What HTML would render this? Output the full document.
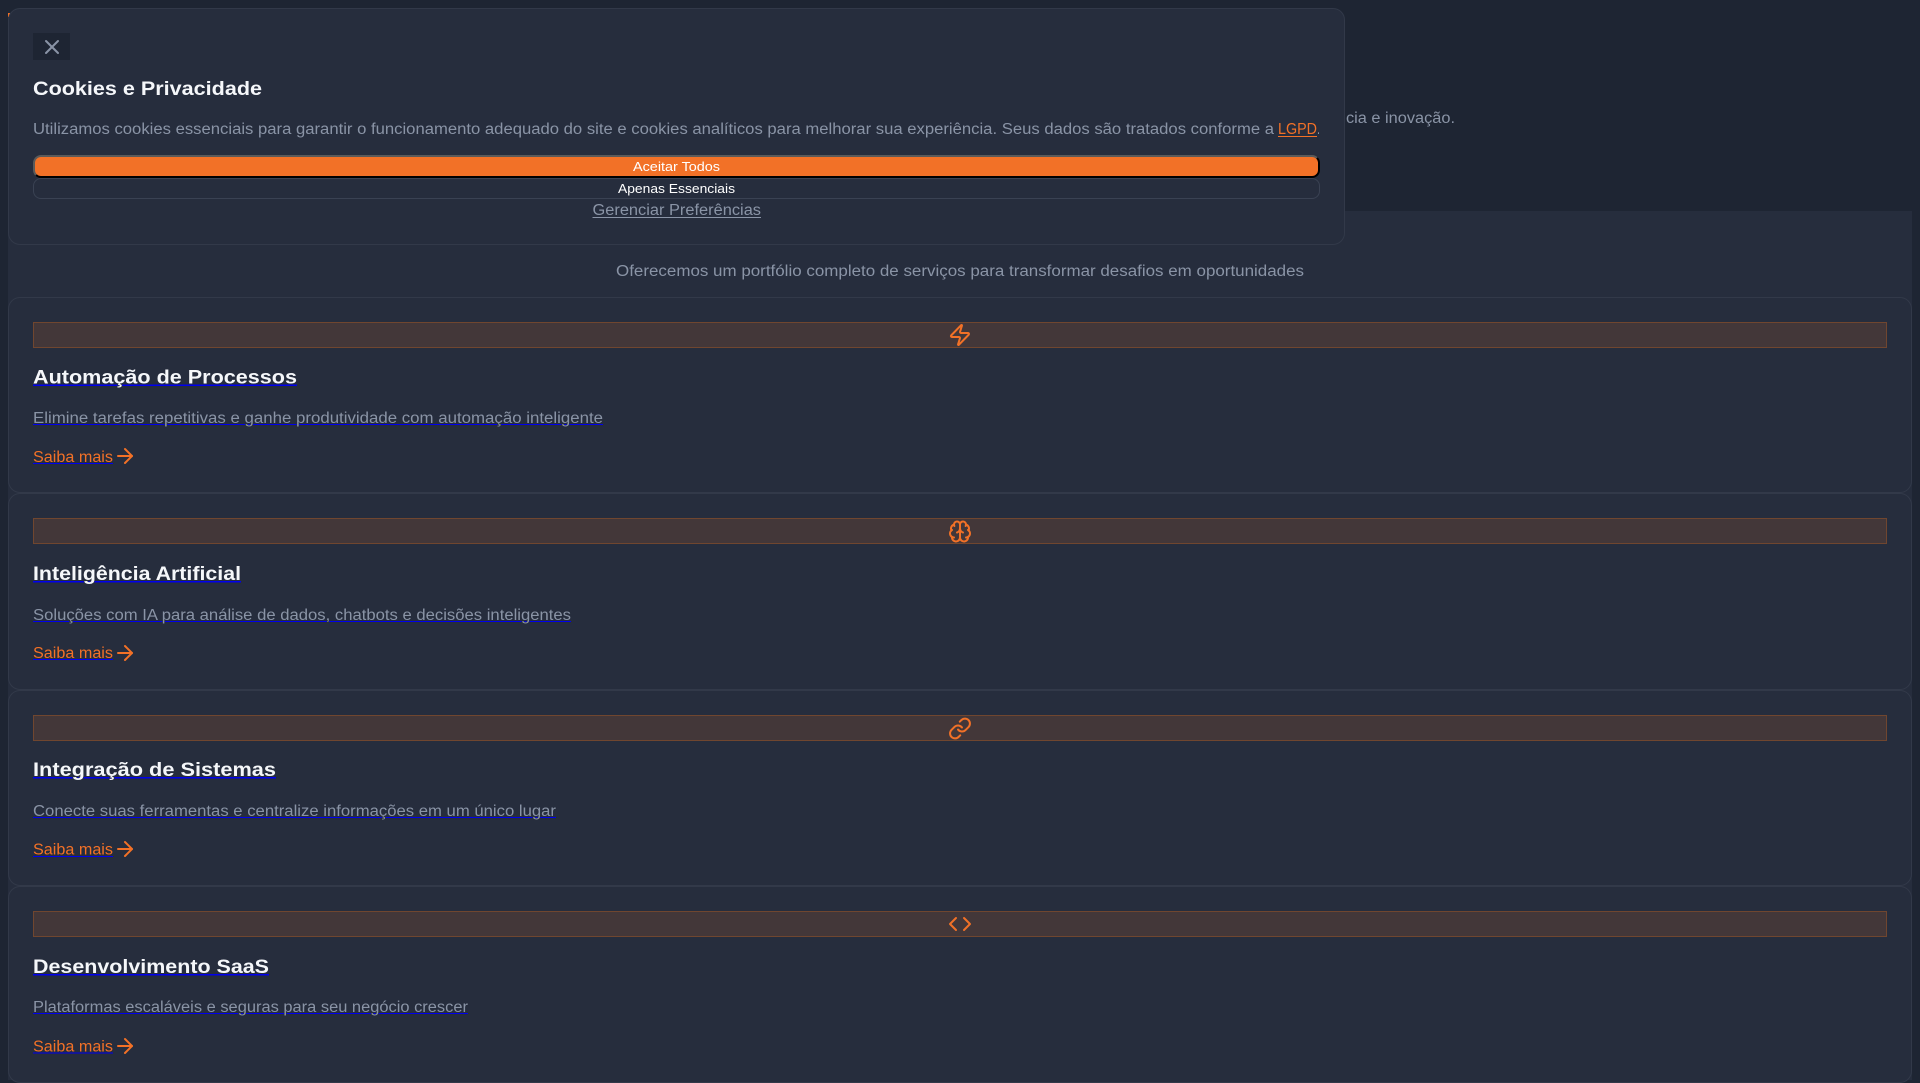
<!DOCTYPE html>
<html lang="pt-BR">
<head>
<meta charset="utf-8">
<title>Cookies e Privacidade</title>
<style>
html,body{margin:0;padding:0;width:1920px;height:1080px;overflow:hidden;background:#1e2533}
.abs,section,.card,.bar,.modal,button{position:absolute;box-sizing:border-box}
section{left:8px;top:211px;width:1904px;height:869px;background:#262d3d}
.card{left:8px;width:1904px;height:196.4px;background:#262d3d;border:1px solid #323949;border-radius:12px}
.bar{left:33px;width:1854px;height:26px;background:#433739;border:1px solid #70462f}
.logo{position:absolute;left:8px;top:13px;width:2px;height:4px;background:#f27127}
.modal{left:8px;top:8px;width:1337px;height:236.5px;background:#262d3d;border:1px solid #323949;border-radius:12px}
button{padding:0;margin:0}
.close{left:33px;top:33px;width:37px;height:27px;background:#1e2533;border:0}
.accept{left:33px;top:155px;width:1287px;height:23px;background:#f27127;border:2px solid;border-color:#5a5a5a #000 #000 #5a5a5a;border-radius:8px}
.ess{left:33px;top:178px;width:1287px;height:21px;background:#262d3d;border:1px solid #3a4253;border-radius:8px}
svg.top{position:absolute;left:0;top:0;width:1920px;height:1080px}
text{font-family:"Liberation Sans",sans-serif}
.t{font-size:19px;font-weight:700;fill:#f5f7fa;paint-order:stroke fill;stroke:#262d3d;stroke-width:1px}
.d{font-size:15.5px;fill:#8a94a6;paint-order:stroke fill;stroke:#262d3d;stroke-width:1px}
.s{font-size:15.5px;fill:#f27127;paint-order:stroke fill;stroke:#262d3d;stroke-width:1px}
.b{font-size:15.5px;fill:#8a94a6}
.u{fill:#0000ee}
.ic{fill:none;stroke:#f27127;stroke-width:2;stroke-linecap:round;stroke-linejoin:round}
</style>
</head>
<body>
<div class="logo"></div>
<section></section>
<div class="card" style="top:297px"></div>
<div class="card" style="top:493.4px"></div>
<div class="card" style="top:689.8px"></div>
<div class="card" style="top:886.2px"></div>
<div class="bar" style="top:322px"></div>
<div class="bar" style="top:518px"></div>
<div class="bar" style="top:715px"></div>
<div class="bar" style="top:911px"></div>
<div class="modal"></div>
<button class="close" aria-label="Fechar"></button>
<button class="accept" aria-label="Aceitar Todos"></button>
<button class="ess" aria-label="Apenas Essenciais"></button>

<svg class="top" viewBox="0 0 1920 1080" xmlns="http://www.w3.org/2000/svg">
  <!-- background text -->
  <text class="b" x="1346" y="123" textLength="109" lengthAdjust="spacingAndGlyphs">cia e inovação.</text>
  <text class="b" x="616" y="276" textLength="688" lengthAdjust="spacingAndGlyphs">Oferecemos um portfólio completo de serviços para transformar desafios em oportunidades</text>

  <!-- modal -->
  <g fill="none" stroke="#8a94a6" stroke-width="2" stroke-linecap="round" stroke-linejoin="round" transform="translate(40 35)"><path d="M18 6 6 18"/><path d="m6 6 12 12"/></g>
  <text x="33" y="95" font-size="19" font-weight="700" fill="#f5f7fa" textLength="229" lengthAdjust="spacingAndGlyphs">Cookies e Privacidade</text>
  <text class="b" x="33" y="134" textLength="1241" lengthAdjust="spacingAndGlyphs">Utilizamos cookies essenciais para garantir o funcionamento adequado do site e cookies analíticos para melhorar sua experiência. Seus dados são tratados conforme a</text>
  <text x="1278" y="134" font-size="16" fill="#f27127" textLength="39" lengthAdjust="spacingAndGlyphs">LGPD</text>
  <rect x="1278" y="136" width="39" height="1" fill="#f27127"/>
  <text class="b" x="1317" y="134" textLength="3" lengthAdjust="spacingAndGlyphs">.</text>
  <text x="633" y="171" font-size="13" fill="#fff" textLength="87" lengthAdjust="spacingAndGlyphs">Aceitar Todos</text>
  <text x="618" y="193" font-size="13" fill="#fff" textLength="117" lengthAdjust="spacingAndGlyphs">Apenas Essenciais</text>
  <text class="b" x="592.5" y="215" textLength="168.5" lengthAdjust="spacingAndGlyphs">Gerenciar Preferências</text>
  <rect x="592.5" y="217" width="168.5" height="1" fill="#8a94a6"/>

  <!-- card 1 -->
  <g transform="translate(948 323)"><path class="ic" d="M4 14a1 1 0 0 1-.78-1.63l9.9-10.2a.5.5 0 0 1 .86.46l-1.92 6.02A1 1 0 0 0 13 10h7a1 1 0 0 1 .78 1.63l-9.9 10.2a.5.5 0 0 1-.86-.46l1.92-6.02A1 1 0 0 0 11 14z"/></g>
  <rect class="u" x="33" y="384.5" width="264" height="1.5"/>
  <text class="t" x="33" y="383.4" textLength="264" lengthAdjust="spacingAndGlyphs">Automação de Processos</text>
  <rect class="u" x="33" y="424" width="570" height="1"/>
  <text class="d" x="33" y="423" textLength="570" lengthAdjust="spacingAndGlyphs">Elimine tarefas repetitivas e ganhe produtividade com automação inteligente</text>
  <rect class="u" x="33" y="463" width="80" height="1"/>
  <text class="s" x="33" y="462" textLength="80" lengthAdjust="spacingAndGlyphs">Saiba mais</text>
  <g transform="translate(113 444)"><path class="ic" d="M5 12h14"/><path class="ic" d="m12 5 7 7-7 7"/></g>

  <!-- card 2 -->
  <g transform="translate(948 519.5)" class="ic"><path d="M12 5a3 3 0 1 0-5.997.125 4 4 0 0 0-2.526 5.77 4 4 0 0 0 .556 6.588A4 4 0 1 0 12 18Z"/><path d="M12 5a3 3 0 1 1 5.997.125 4 4 0 0 1 2.526 5.77 4 4 0 0 1-.556 6.588A4 4 0 1 1 12 18Z"/><path d="M15 13a4.5 4.5 0 0 1-3-4 4.5 4.5 0 0 1-3 4"/><path d="M17.599 6.5a3 3 0 0 0 .399-1.375"/><path d="M6.003 5.125A3 3 0 0 0 6.401 6.5"/><path d="M3.477 10.896a4 4 0 0 1 .585-.396"/><path d="M19.938 10.5a4 4 0 0 1 .585.396"/><path d="M6 18a4 4 0 0 1-1.967-.516"/><path d="M19.967 17.484A4 4 0 0 1 18 18"/></g>
  <rect class="u" x="33" y="581" width="208" height="1.5"/>
  <text class="t" x="33" y="580" textLength="208" lengthAdjust="spacingAndGlyphs">Inteligência Artificial</text>
  <rect class="u" x="33" y="621" width="538" height="1"/>
  <text class="d" x="33" y="620" textLength="538" lengthAdjust="spacingAndGlyphs">Soluções com IA para análise de dados, chatbots e decisões inteligentes</text>
  <rect class="u" x="33" y="659" width="80" height="1"/>
  <text class="s" x="33" y="658" textLength="80" lengthAdjust="spacingAndGlyphs">Saiba mais</text>
  <g transform="translate(113 641)"><path class="ic" d="M5 12h14"/><path class="ic" d="m12 5 7 7-7 7"/></g>

  <!-- card 3 -->
  <g transform="translate(948 716.5)" class="ic"><path d="M10 13a5 5 0 0 0 7.54.54l3-3a5 5 0 0 0-7.07-7.07l-1.72 1.71"/><path d="M14 11a5 5 0 0 0-7.54-.54l-3 3a5 5 0 0 0 7.07 7.07l1.71-1.71"/></g>
  <rect class="u" x="33" y="777" width="243" height="1.5"/>
  <text class="t" x="33" y="776" textLength="243" lengthAdjust="spacingAndGlyphs">Integração de Sistemas</text>
  <rect class="u" x="33" y="817" width="523" height="1"/>
  <text class="d" x="33" y="816" textLength="523" lengthAdjust="spacingAndGlyphs">Conecte suas ferramentas e centralize informações em um único lugar</text>
  <rect class="u" x="33" y="856" width="80" height="1"/>
  <text class="s" x="33" y="854.6" textLength="80" lengthAdjust="spacingAndGlyphs">Saiba mais</text>
  <g transform="translate(113 837)"><path class="ic" d="M5 12h14"/><path class="ic" d="m12 5 7 7-7 7"/></g>

  <!-- card 4 -->
  <g transform="translate(948 912)" class="ic"><path d="m16 18 6-6-6-6"/><path d="m8 6-6 6 6 6"/></g>
  <rect class="u" x="33" y="974" width="236" height="1.5"/>
  <text class="t" x="33" y="973" textLength="236" lengthAdjust="spacingAndGlyphs">Desenvolvimento SaaS</text>
  <rect class="u" x="33" y="1013" width="435" height="1"/>
  <text class="d" x="33" y="1012" textLength="435" lengthAdjust="spacingAndGlyphs">Plataformas escaláveis e seguras para seu negócio crescer</text>
  <rect class="u" x="33" y="1052.5" width="80" height="1"/>
  <text class="s" x="33" y="1051.5" textLength="80" lengthAdjust="spacingAndGlyphs">Saiba mais</text>
  <g transform="translate(113 1034)"><path class="ic" d="M5 12h14"/><path class="ic" d="m12 5 7 7-7 7"/></g>
</svg>
</body>
</html>
